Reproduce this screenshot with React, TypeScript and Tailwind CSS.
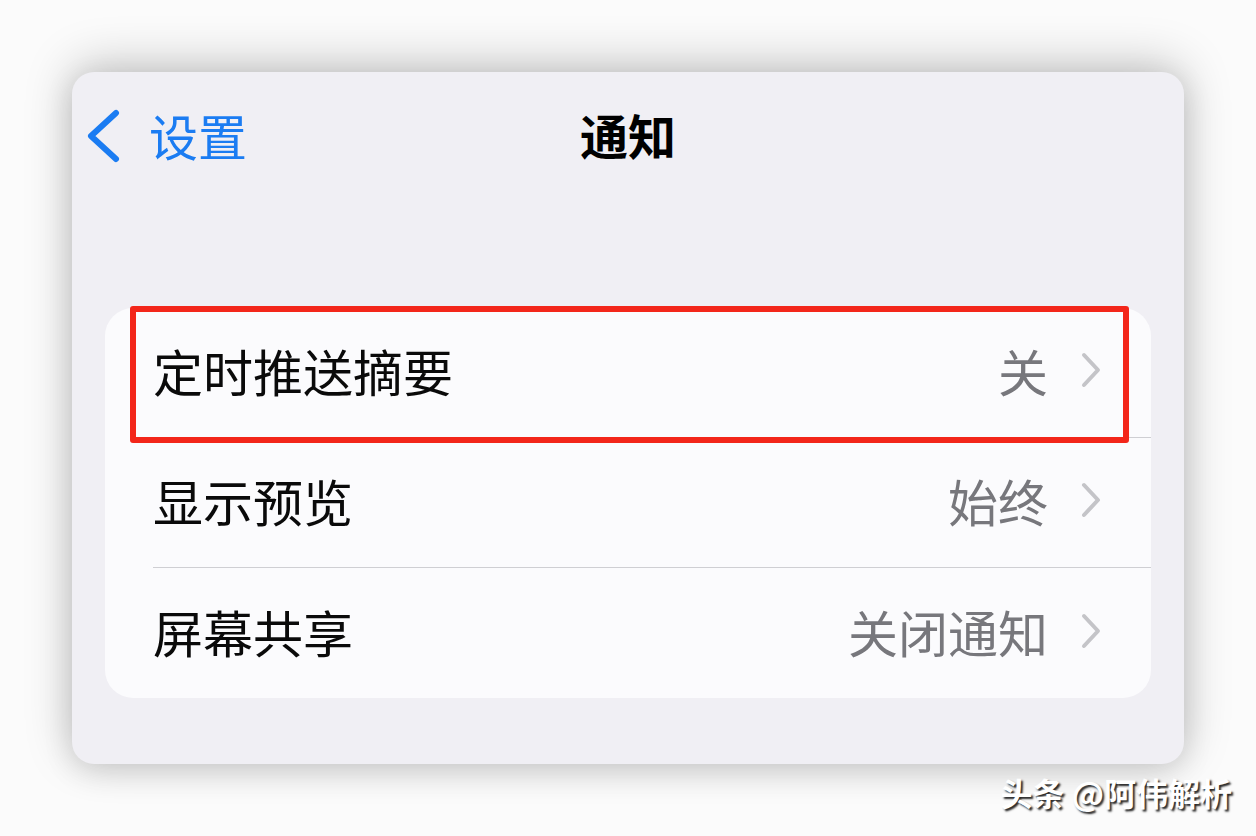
import React from "react"

const font = { fontFamily: '"Noto Sans CJK SC", "Noto Sans", sans-serif' }

function Chevron({ className }: { className?: string }) {
  return (
    <svg viewBox="0 0 20 36" className={className} fill="none">
      <path d="M3 3 L17 18 L3 33" stroke="currentColor" strokeWidth="4" strokeLinecap="round" strokeLinejoin="round" />
    </svg>
  )
}

const rows = [
  { label: "定时推送摘要", value: "关" },
  { label: "显示预览", value: "始终" },
  { label: "屏幕共享", value: "关闭通知" },
]

export default function App() {
  return (
    <div className="w-[1256px] h-[836px] overflow-hidden bg-[#fbfbfb] flex flex-col" style={font}>
      <div className="ml-[72px] mt-[72px] w-[1112px] h-[692px] rounded-[22px] bg-[#f0eff4] shadow-[0_-8px_48px_rgba(0,0,0,0.22),0_8px_30px_rgba(0,0,0,0.12)] flex flex-col">
        {/* nav bar */}
        <div className="h-[124px] grid grid-cols-[1fr_auto_1fr] items-center px-[13px]">
          <div className="flex items-center gap-[28px] text-[#1b7cf2]">
            <svg viewBox="0 0 36 54" className="w-[36px] h-[54px] mt-[4px]" fill="none">
              <path d="M31 4 L6 27 L31 50" stroke="currentColor" strokeWidth="6" strokeLinecap="round" strokeLinejoin="round" />
            </svg>
            <span className="text-[49px] leading-none">设置</span>
          </div>
          <div className="text-[48px] font-bold leading-none text-black">通知</div>
          <div />
        </div>

        {/* group */}
        <div className="relative mt-[112px] mx-[33px] rounded-[28px] bg-[#fbfbfd]">
          {rows.map((r, i) => (
            <div key={r.label} className="h-[130px] pl-[48px] flex flex-col">
              <div className="flex-1 flex items-center pr-[50px] pb-[5px]">
                <span className="flex-1 text-[50px] leading-none text-[#0a0a0a]">{r.label}</span>
                <span className="text-[50px] leading-none text-[#77777c]">{r.value}</span>
                <Chevron className="ml-[33px] w-[20px] h-[36px] text-[#c4c4c8]" />
              </div>
              {i < rows.length - 1 && <div className="h-[1.5px] bg-[#cfcfd3]" />}
            </div>
          ))}
          <div className="absolute left-[25px] top-[-2px] w-[999px] h-[137px] border-[6px] border-[#f3261a] rounded-[3px]" />
        </div>
      </div>

      <div className="mt-[12px] flex justify-end pr-[24px]">
        <span className="text-[32px] leading-none text-white font-bold [text-shadow:2px_2px_2px_rgba(0,0,0,0.85)]">
          头条 @阿伟解析
        </span>
      </div>
    </div>
  )
}
